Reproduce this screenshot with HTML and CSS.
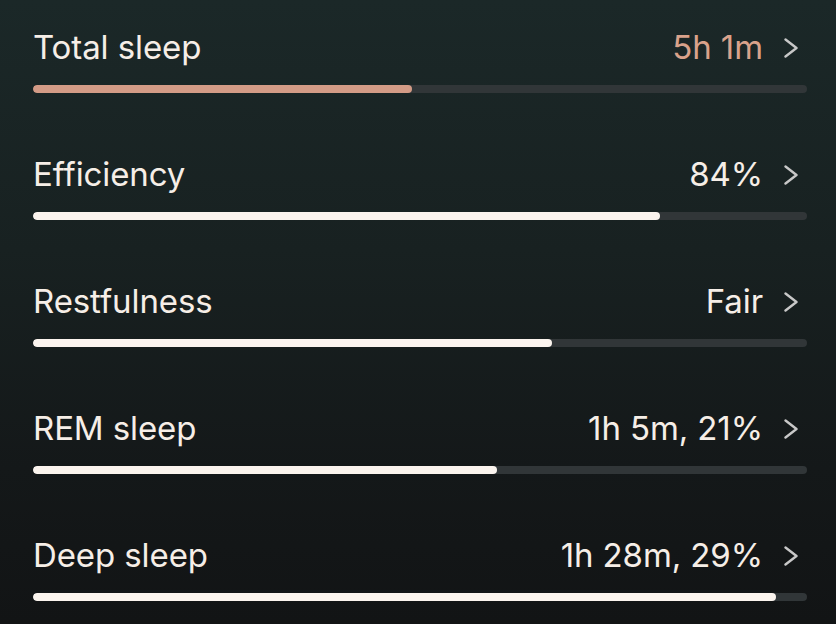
FILE: index.html
```html
<!DOCTYPE html>
<html lang="en">
  <head>
    <meta charset="UTF-8" />
    <meta name="viewport" content="width=device-width, initial-scale=1.0" />
    <title>Sleep contributors</title>
    <link rel="stylesheet" href="styles.css">
  </head>
  <body>
    <main class="contributors">
      <div class="row">
        <div class="row-head">
          <span class="label">Total sleep</span>
          <span class="value value-warn">5h 1m</span>
          <svg class="chevron" viewBox="0 0 14 20"><path d="M1.5 1.5 L12.5 10 L1.5 18.5" /></svg>
        </div>
        <div class="track"><div class="fill fill-warn" style="width: 49%"></div></div>
      </div>

      <div class="row">
        <div class="row-head">
          <span class="label">Efficiency</span>
          <span class="value">84%</span>
          <svg class="chevron" viewBox="0 0 14 20"><path d="M1.5 1.5 L12.5 10 L1.5 18.5" /></svg>
        </div>
        <div class="track"><div class="fill" style="width: 81%"></div></div>
      </div>

      <div class="row">
        <div class="row-head">
          <span class="label">Restfulness</span>
          <span class="value">Fair</span>
          <svg class="chevron" viewBox="0 0 14 20"><path d="M1.5 1.5 L12.5 10 L1.5 18.5" /></svg>
        </div>
        <div class="track"><div class="fill" style="width: 67%"></div></div>
      </div>

      <div class="row">
        <div class="row-head">
          <span class="label">REM sleep</span>
          <span class="value">1h 5m, 21%</span>
          <svg class="chevron" viewBox="0 0 14 20"><path d="M1.5 1.5 L12.5 10 L1.5 18.5" /></svg>
        </div>
        <div class="track"><div class="fill" style="width: 60%"></div></div>
      </div>

      <div class="row">
        <div class="row-head">
          <span class="label">Deep sleep</span>
          <span class="value">1h 28m, 29%</span>
          <svg class="chevron" viewBox="0 0 14 20"><path d="M1.5 1.5 L12.5 10 L1.5 18.5" /></svg>
        </div>
        <div class="track"><div class="fill" style="width: 96%"></div></div>
      </div>
    </main>
  </body>
</html>
```

FILE: styles.css
```css
:root {
  --text-color: #f6eee7;
  --warn-color: #d9a28b;
  --track-color: #313638;
  --chevron-color: #c8c8c8;
}

* {
  margin: 0;
  padding: 0;
  box-sizing: border-box;
}

html,
body {
  height: 100%;
}

body {
  font-family: Inter, "Noto Sans", sans-serif;
  color: var(--text-color);
  background: linear-gradient(180deg, #1b2828 0%, #182121 40%, #141819 75%, #121415 100%);
  overflow: hidden;
}

.contributors {
  padding: 27px 29px 0 33px;
}

.row {
  height: 127px;
}

.row:last-child {
  height: auto;
}

.row-head {
  display: flex;
  align-items: center;
  height: 40px;
  line-height: 40px;
  font-size: 33px;
  letter-spacing: -0.1px;
  padding-right: 9px;
}

.label {
  flex: 1;
}

.value-warn {
  color: var(--warn-color);
}

.chevron {
  flex: none;
  width: 14px;
  height: 20px;
  margin-left: 21px;
  margin-top: 2px;
  fill: none;
  stroke: var(--chevron-color);
  stroke-width: 2.4;
  stroke-linecap: round;
  stroke-linejoin: round;
}

.track {
  margin-top: 18px;
  height: 8px;
  border-radius: 4px;
  background: var(--track-color);
  overflow: hidden;
}

.fill {
  height: 100%;
  border-radius: 4px;
  background: #fbf4ee;
}

.fill-warn {
  background: #d39b86;
}
```
